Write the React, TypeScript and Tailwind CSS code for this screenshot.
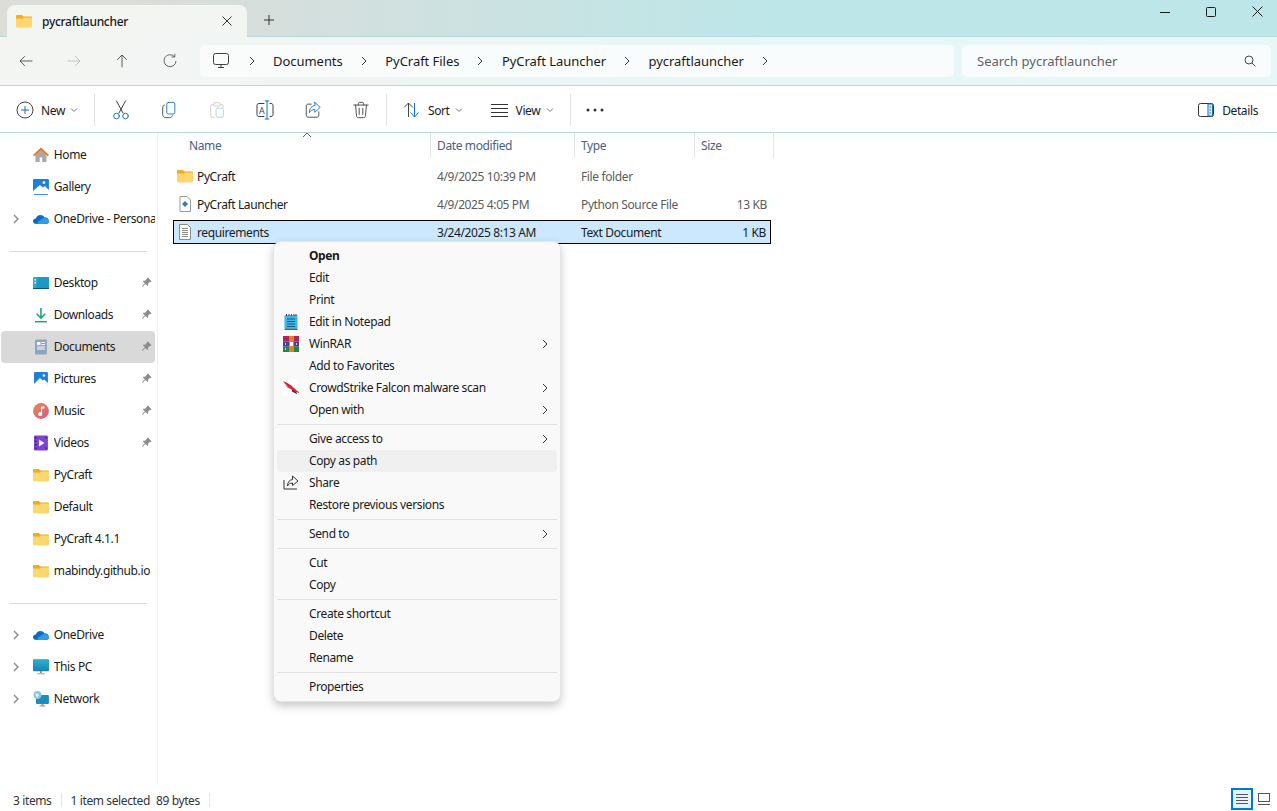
import React from "react";

const Folder = ({ s = 16 }: { s?: number }) => (
  <svg width={s} height={s} viewBox="0 0 16 16" className="shrink-0">
    <path d="M0 3.2C0 2.5.5 2 1.2 2h4.1c.4 0 .7.1 1 .4L7.6 3.6H14.8c.7 0 1.2.5 1.2 1.2V8H0Z" fill="#f0ab1e" />
    <path d="M0 5.6h7l1.2-1h6.6c.7 0 1.2.5 1.2 1.2v7.400c0 .7-.5 1.2-1.2 1.2H1.2C.5 14.400 0 13.900 0 13.200Z" fill="#fcd66f" />
  </svg>
);
const Home = () => (
  <svg width="16" height="16" viewBox="0 0 16 16">
    <path d="M2.500 8v7h4.200v-4.500h2.600V15h4.200V8L8 3Z" fill="#a9a9a9" />
    <path d="M0 8 8 .5 16 8l-1.200 1.200L8 3.200 1.200 9.200Z" fill="#e5761f" />
  </svg>
);
const Gallery = () => (
  <svg width="16" height="16" viewBox="0 0 16 16">
    <rect x="0" y="0" width="16" height="14" rx="1" fill="#1b80d8" />
    <path d="M0 12 7 6l3 2.500L12 7l4 4v3H0Z" fill="#fff" />
    <circle cx="11" cy="3.500" r="1.400" fill="#fff" />
    <path d="M1 15h14v1H1Z" fill="#3b8fd6" />
  </svg>
);
const Cloud = () => (
  <svg width="16" height="16" viewBox="0 0 16 16">
    <path d="M3.500 13C1.500 13 0 11.800 0 10.200 0 8.600 1.300 7.600 2.800 7.600 3.500 5.400 5.300 4 7.400 4c1.800 0 3.300.9 4 2.300C14 6.300 16 8 16 10.200 16 11.800 14.800 13 13 13Z" fill="#0f6cbd" />
    <path d="M5 13c-1-1.700.3-3.600 2.500-3.600 1-1.500 3.300-2.700 5-2.200 2 .6 3.500 1.200 3.500 3C16 11.800 14.800 13 13 13Z" fill="#2a9fe8" />
  </svg>
);
const Desktop = () => (
  <svg width="16" height="16" viewBox="0 0 16 16">
    <rect x="0" y="2" width="16" height="12" rx="1" fill="#2aaecb" />
    <path d="M5 2h10a1 1 0 0 1 1 1v11H3Z" fill="#1b98c7" />
    <rect x="1.500" y="4" width="1.500" height="1.500" fill="#fff" />
    <rect x="1.500" y="7" width="1.500" height="1.500" fill="#fff" />
    <rect x="0" y="13" width="16" height="1" fill="#12506e" />
  </svg>
);
const Download = () => (
  <svg width="16" height="16" viewBox="0 0 16 16">
    <path d="M7.200 1h1.600v8.200l3-3 1.100 1.100L8 12.200 3.100 7.300l1.100-1.100 3 3Z" fill="#1ca67e" />
    <rect x="2" y="14" width="12" height="1.500" fill="#1ca67e" />
  </svg>
);
const Docs = () => (
  <svg width="16" height="16" viewBox="0 0 16 16">
    <rect x="2" y="0.500" width="12" height="15" rx="1" fill="#8ea4c4" />
    <rect x="4" y="3" width="3.500" height="3" fill="#fff" />
    <path d="M8.500 3H12v1H8.500ZM8.500 5H12v1H8.500ZM4 7.500h8v1H4ZM4 9.500h8v1H4Z" fill="#fff" />
  </svg>
);
const Pictures = () => (
  <svg width="16" height="16" viewBox="0 0 16 16">
    <rect x="1" y="1" width="14" height="14" rx="1" fill="#1b80d8" />
    <path d="M1 13 7 7l3 2.500 1.500-1L15 12v3H1Z" fill="#fff" />
    <circle cx="11" cy="4.500" r="1.300" fill="#fff" />
  </svg>
);
const Music = () => (
  <svg width="16" height="16" viewBox="0 0 16 16">
    <defs>
      <linearGradient id="mg" x1="0" y1="0" x2="1" y2="1">
        <stop offset="0" stopColor="#e9894f" />
        <stop offset="1" stopColor="#cf5b8e" />
      </linearGradient>
    </defs>
    <circle cx="8" cy="8" r="8" fill="url(#mg)" />
    <path d="M8 3.500h3.500v2H9.200V11a2 2 0 1 1-1.200-1.800Z" fill="#fff" />
  </svg>
);
const Videos = () => (
  <svg width="16" height="16" viewBox="0 0 16 16">
    <rect x="1" y="0.500" width="14" height="15" rx="1" fill="#7d43d1" />
    <path d="M6 4.500v7l5.500-3.500Z" fill="#fff" />
    <path d="M2 2h1.500v1.500H2ZM2 5.500h1.500V7H2ZM2 9h1.500v1.500H2ZM2 12.500h1.500V14H2ZM12.500 2H14v1.500h-1.500ZM12.500 12.500H14V14h-1.500Z" fill="#3b1f73" />
  </svg>
);
const PC = () => (
  <svg width="16" height="16" viewBox="0 0 16 16">
    <defs>
      <linearGradient id="pcg" x1="0" y1="0" x2="0" y2="1">
        <stop offset="0" stopColor="#2bb3cc" />
        <stop offset="1" stopColor="#1483b8" />
      </linearGradient>
    </defs>
    <rect x="0" y="0.500" width="16" height="11.500" rx="1" fill="url(#pcg)" stroke="#1a6a8a" strokeWidth=".4" />
    <path d="M7 12h2v2H7ZM4.500 14.200h7v1h-7Z" fill="#8f9aa3" />
  </svg>
);
const Net = () => (
  <svg width="16" height="16" viewBox="0 0 16 16">
    <rect x="3" y="4" width="13" height="9" rx="1" fill="#1a8fbe" />
    <path d="M8.500 13h2v1.500h-2ZM6.500 14.500h6v1h-6Z" fill="#8f9aa3" />
    <circle cx="4.500" cy="4" r="4" fill="#8fc3e6" />
    <path d="M2 2.500h3l1 2-2 2.500-1-2.500Z" fill="#dff0fb" />
  </svg>
);
const Pin = () => (
  <svg width="11" height="11" viewBox="0 0 11 11">
    <path d="M6.800.4 10.600 4.200 9.700 5 9 4.800 7 6.800c.3 1 .1 1.800-.3 2.300L4.500 6.900 1.300 10.100.7 9.500 3.900 6.300 1.700 4.100c.6-.5 1.400-.6 2.300-.3l2-2-.1-.7Z" fill="#8c8c8c" />
  </svg>
);
const Chev = ({ c = "#1a1a1a", w = 10, t = 1 }: { c?: string; w?: number; t?: number }) => (
  <svg width={w} height={w} viewBox="0 0 10 10" className="shrink-0">
    <path d="M3 1l4 4-4 4" fill="none" stroke={c} strokeWidth={t} />
  </svg>
);
const Down = ({ c = "#777" }: { c?: string }) => (
  <svg width="8" height="8" viewBox="0 0 8 8" className="shrink-0">
    <path d="M1 2.500 4 5.500 7 2.500" fill="none" stroke={c} strokeWidth="1" />
  </svg>
);

const I = ({ children, s = 18 }: { children: React.ReactNode; s?: number }) => (
  <svg width={s} height={s} viewBox="0 0 20 20" fill="none" strokeLinecap="round" strokeLinejoin="round" className="shrink-0">
    {children}
  </svg>
);
const D = "#3f3f3f";
const B = "#1474c4";

const toolIcons: React.ReactNode[] = [
  <I s={20}>
    <path d="M5.500 1 12 13M14.500 1 8 13" stroke={D} />
    <circle cx="5.500" cy="16" r="2.800" stroke={B} />
    <circle cx="14.500" cy="16" r="2.800" stroke={B} />
  </I>,
  <I>
    <rect x="7.500" y="1.500" width="9" height="13" rx="2" stroke={B} />
    <path d="M5 4.500C3.500 5 3 6 3 7v8c0 2 1.500 3.500 3.500 3.500h4c1.500 0 2.500-.7 3-2" stroke={D} />
  </I>,
  <I>
    <path d="M6 4H4.500C3.500 4 3 4.700 3 5.500v11c0 1 .5 1.500 1.500 1.500H7" stroke="#c9c9c9" />
    <path d="M14 4h1.500c1 0 1.500.7 1.500 1.500V7" stroke="#c9c9c9" />
    <rect x="6.500" y="2" width="7" height="3.500" rx="1" stroke="#c9c9c9" />
    <rect x="9" y="8" width="8" height="10" rx="1.500" stroke="#a9cfee" />
  </I>,
  <I s={20}>
    <path d="M9 3.500H4C2.500 3.500 2 4.500 2 5.500v9C2 15.500 2.500 16.500 4 16.500h5M15 3.500h1c1.500 0 2 1 2 2v9c0 1-.5 2-2 2h-1" stroke={D} />
    <path d="M10.200 1h1.800 1.800M12 1v18M10.200 19H13.800" stroke={B} />
    <text x="6.700" y="13.500" fontSize="9" fontFamily="'Open Sans', sans-serif" textAnchor="middle" fill={D}>A</text>
  </I>,
  <I>
    <path d="M8 3.500H4.500C3 3.500 2.500 4.500 2.500 5.500v10c0 1.500 1 2.500 2.500 2.500h9.500c1.200 0 2-1 2-2.500V12" stroke={D} />
    <path d="M12 1.500 18 7l-6 5.500V9.500c-3 0-4.500 1-6 3.500 0-5 2.500-7.500 6-8Z" stroke={B} />
  </I>,
  <I>
    <path d="M2 4.500h16M7 4.500V3c0-1 .7-1.500 1.500-1.500h3c.8 0 1.500.5 1.500 1.500v1.500" stroke={D} />
    <path d="M4 4.500 5 16.500C5.100 17.800 6 18.500 7 18.500h6c1 0 1.900-.7 2-2l1-12M8 8v7M12 8v7" stroke={D} />
  </I>,
];

function Nav({ icon, label, chev, pin, active }: { icon: React.ReactNode; label: string; chev?: boolean; pin?: boolean; active?: boolean }) {
  return (
    <div className={`relative ml-px flex h-8 w-[154px] items-center rounded-[4px] ${active ? "bg-[#d9d9d9]" : ""}`}>
      <div className="flex w-[32px] items-center justify-end pr-[12px]">{chev && <Chev c="#8a8a8a" t={1.4} />}</div>
      {icon}
      <span className="ml-[5px] w-[102px] overflow-hidden whitespace-nowrap">{label}</span>
      {pin && <span className="absolute right-[3px] top-[10px]"><Pin /></span>}
    </div>
  );
}

const SideRule = () => (
  <div className="flex h-8 items-center pl-[9px]"><div className="h-px w-[138px] bg-[#d9d9d9]" /></div>
);

type M = { t?: string; b?: boolean; icon?: React.ReactNode; sub?: boolean; hot?: boolean; sep?: boolean };

const Notepad = () => (
  <svg width="16" height="16" viewBox="0 0 16 16">
    <rect x="1.500" y="1" width="13" height="14" rx="1" fill="#3fb6e6" />
    <path d="M3 0h1v2H3ZM5.500 0h1v2h-1ZM8 0h1v2H8ZM10.500 0h1v2h-1ZM12.500 0h1v2h-1Z" fill="#4a4a4a" />
    <path d="M4 4.500h8v1H4ZM4 7h8v1H4ZM4 9.500h8v1H4ZM4 12h8v1H4Z" fill="#0f5e87" />
    <rect x="1.500" y="14.800" width="13" height="1.200" fill="#8a4b2b" />
  </svg>
);
const Rar = () => (
  <svg width="16" height="16" viewBox="0 0 16 16">
    <rect x="0" y="0" width="16" height="5.300" fill="#b0245e" />
    <rect x="0" y="5.300" width="16" height="5.400" fill="#4e3aa8" />
    <rect x="0" y="10.700" width="16" height="5.300" fill="#1f8a3d" />
    <rect x="6" y="0" width="5" height="16" fill="#e67e22" />
    <rect x="7" y="6" width="3" height="4" fill="#fff" />
    <path d="M2 7h1v2H2ZM13 7h1v2h-1ZM2 12h1v2H2Z" fill="#f2d33c" />
  </svg>
);
const Falcon = () => (
  <svg width="16" height="16" viewBox="0 0 16 16">
    <rect width="16" height="16" fill="#fff" />
    <path d="M0 1c4 1.500 8 4 11 7 1.500 1.500 3 3 4.500 3.500L16 13c-2-.5-3.500-1-5-2C7 9 3 5.500 0 1Z" fill="#e0212d" />
    <path d="M9 9.500l4 2.500 1.500 2.500L9 11.500Z" fill="#333" />
    <path d="M2 5c2 1 4 2.500 6 4.500L4.500 7.500Z" fill="#555" />
  </svg>
);
const ShareM = () => (
  <svg width="16" height="16" viewBox="0 0 16 16" fill="none" stroke="#333" strokeWidth="1" strokeLinejoin="round">
    <path d="M1 5v9h13" />
    <path d="M9.500 1 15 6l-5.500 4.500V8C7 8 5.500 9 4.500 11c0-4 2-6 5-6.500Z" />
  </svg>
);

const menu: M[] = [
  { t: "Open", b: true },
  { t: "Edit" },
  { t: "Print" },
  { t: "Edit in Notepad", icon: <Notepad /> },
  { t: "WinRAR", icon: <Rar />, sub: true },
  { t: "Add to Favorites" },
  { t: "CrowdStrike Falcon malware scan", icon: <Falcon />, sub: true },
  { t: "Open with", sub: true },
  { sep: true },
  { t: "Give access to", sub: true },
  { t: "Copy as path", hot: true },
  { t: "Share", icon: <ShareM /> },
  { t: "Restore previous versions" },
  { sep: true },
  { t: "Send to", sub: true },
  { sep: true },
  { t: "Cut" },
  { t: "Copy" },
  { sep: true },
  { t: "Create shortcut" },
  { t: "Delete" },
  { t: "Rename" },
  { sep: true },
  { t: "Properties" },
];

const crumbs = ["Documents", "PyCraft Files", "PyCraft Launcher", "pycraftlauncher"];

export default function App() {
  return (
    <div className="relative flex h-[811px] w-[1277px] flex-col overflow-hidden bg-white text-[12px] tracking-[-0.38px] text-[#1a1a1a] font-['Open_Sans',sans-serif]">
      {/* title */}
      <div className="flex h-[37px] shrink-0 items-end border-b border-[#b5d8da] bg-gradient-to-r from-[#dcdcd8] from-10% to-[#bde6e8] to-60% pl-[7px]">
        <div className="-mb-px flex h-[32px] w-[240px] items-center rounded-t-[8px] bg-[#f3f5f3] pl-[9px] pr-[15px]">
          <Folder s={16} />
          <span className="ml-[10px] pt-[2px] font-medium tracking-[-0.3px]">pycraftlauncher</span>
          <svg width="10" height="10" viewBox="0 0 10 10" className="ml-auto" stroke="#333"><path d="M.5.500l9 9M9.500.500l-9 9" /></svg>
        </div>
        <svg width="10" height="10" viewBox="0 0 10 10" stroke="#333" className="mb-[11px] ml-[17px]"><path d="M5 0v10M0 5h10" /></svg>
        <div className="ml-auto mb-[19px] flex items-center">
          <svg width="10" height="10" viewBox="0 0 10 10" stroke="#1a1a1a" className="mr-[36px]"><path d="M0 5.500h10" /></svg>
          <svg width="10" height="10" viewBox="0 0 10 10" fill="none" stroke="#1a1a1a" className="mr-[36px]"><rect x=".5" y=".5" width="9" height="9" rx="1" /></svg>
          <svg width="11" height="11" viewBox="0 0 11 11" stroke="#1a1a1a" className="mr-[14px]"><path d="M.5.500l10 10M10.500.500l-10 10" /></svg>
        </div>
      </div>
      {/* address */}
      <div className="flex h-[49px] shrink-0 items-center border-b border-[#bfd9d9] bg-gradient-to-r from-[#f3f5f3] from-10% to-[#e7f6f6] to-60% pl-[2px] pr-[6px]">
        <div className="flex w-[198px] items-center">
          {[
            <path key="a" d="M18 10H2.500M8.500 4l-6 6 6 6" stroke="#333" />,
            <path key="b" d="M2 10h15.500M11.500 4l6 6-6 6" stroke="#b5b8b8" />,
            <path key="c" d="M10 18V2.500M4 8.500l6-6 6 6" stroke="#333" />,
            <path key="d" d="M15.500 4.500A7.500 7.500 0 1 0 17.500 10M12 5h4V1" stroke="#444" />,
          ].map((p, i) => (
            <div key={i} className="flex w-[48px] justify-center">
              <svg width="16" height="16" viewBox="0 0 20 20" fill="none">{p}</svg>
            </div>
          ))}
        </div>
        <div className="flex h-[32px] w-[754px] items-center rounded-[5px] bg-[#fbfdfd]/90 pl-[13px] text-[13px] tracking-[-0.04px]">
          <svg width="16" height="16" viewBox="0 0 16 16" fill="none" stroke="#3f3f3f" className="mr-[17.5px]">
            <rect x=".5" y=".5" width="15" height="11" rx="2" />
            <path d="M5 14.500h6M8 12v2" />
          </svg>
          <Chev c="#333" w={10} />
          {crumbs.map((c) => (
            <React.Fragment key={c}>
              <span className="ml-[16.5px] mr-[16px] whitespace-nowrap pt-[2px]">{c}</span>
              <Chev c="#333" w={10} />
            </React.Fragment>
          ))}
        </div>
        <div className="ml-[8px] flex h-[32px] flex-1 items-center justify-between rounded-[5px] bg-[#fbfdfd]/90 pl-[15px] pr-[15px] text-[13px] tracking-[0px] text-[#5f5f5f]">
          <span className="pt-[2px]">Search pycraftlauncher</span>
          <svg width="12" height="12" viewBox="0 0 12 12" fill="none" stroke="#4a4a4a"><circle cx="5" cy="5" r="4" /><path d="M8 8l3.500 3.500" /></svg>
        </div>
      </div>
      {/* toolbar */}
      <div className="flex h-[47px] shrink-0 items-center border-b border-[#b5d8da] pl-[16px] pr-[19px] pt-[2px]">
        <svg width="18" height="18" viewBox="0 0 18 18" fill="none">
          <circle cx="9" cy="9" r="8" stroke="#444" />
          <path d="M9 5v8M5 9h8" stroke={B} />
        </svg>
        <span className="ml-[7px] pt-px">New</span>
        <span className="ml-[5px]"><Down /></span>
        <div className="ml-[16px] h-[32px] w-px bg-[#e2e2e2]" />
        {toolIcons.map((ic, i) => (
          <div key={i} className={`flex w-[48px] justify-center ${i === 0 ? "ml-[2px]" : ""}`}>{ic}</div>
        ))}
        <div className="ml-[1px] h-[32px] w-px bg-[#e2e2e2]" />
        <svg width="18" height="18" viewBox="0 0 18 18" fill="none" className="ml-[16px]">
          <path d="M5.500 16V2M1 6.500l4.500-4.500L10 6.500" stroke="#444" />
          <path d="M11.500 2v14M7.500 11.500l4 4.500 4-4.500" stroke={B} />
        </svg>
        <span className="ml-[7px] pt-px">Sort</span>
        <span className="ml-[5px]"><Down /></span>
        <svg width="17" height="14" viewBox="0 0 17 14" fill="none" stroke="#333" className="ml-[28px]">
          <path d="M0 1.500h17M0 5.500h17M0 9.500h17M0 13.500h17" />
        </svg>
        <span className="ml-[8px] pt-px">View</span>
        <span className="ml-[6px]"><Down /></span>
        <div className="ml-[16px] h-[32px] w-px bg-[#e2e2e2]" />
        <svg width="18" height="4" viewBox="0 0 18 4" fill="#333" className="ml-[15px]">
          <circle cx="2" cy="2" r="1.500" /><circle cx="9" cy="2" r="1.500" /><circle cx="16" cy="2" r="1.500" />
        </svg>
        <svg width="16" height="14" viewBox="0 0 16 14" fill="none" className="ml-auto">
          <rect x=".5" y=".5" width="15" height="13" rx="2" stroke="#333" />
          <path d="M10 1h4.500v12H10Z" fill="#d6e9f8" stroke={B} />
          <path d="M11.500 4h1.500M11.500 7h1.500M11.500 10h1.500" stroke={B} />
        </svg>
        <span className="ml-[8px] pt-px">Details</span>
      </div>
      {/* body */}
      <div className="flex min-h-0 flex-1">
        <div className="w-[158px] shrink-0 border-r border-[#f1f1f1] pt-[6px]">
          <Nav icon={<Home />} label="Home" />
          <Nav icon={<Gallery />} label="Gallery" />
          <Nav icon={<Cloud />} label="OneDrive - Personal" chev />
          <SideRule />
          <Nav icon={<Desktop />} label="Desktop" pin />
          <Nav icon={<Download />} label="Downloads" pin />
          <Nav icon={<Docs />} label="Documents" pin active />
          <Nav icon={<Pictures />} label="Pictures" pin />
          <Nav icon={<Music />} label="Music" pin />
          <Nav icon={<Videos />} label="Videos" pin />
          <Nav icon={<Folder />} label="PyCraft" />
          <Nav icon={<Folder />} label="Default" />
          <Nav icon={<Folder />} label="PyCraft 4.1.1" />
          <Nav icon={<Folder />} label="mabindy.github.io" />
          <SideRule />
          <Nav icon={<Cloud />} label="OneDrive" chev />
          <Nav icon={<PC />} label="This PC" chev />
          <Nav icon={<Net />} label="Network" chev />
        </div>
        <div className="relative flex-1 pl-[15px]">
          <svg width="10" height="6" viewBox="0 0 10 6" fill="none" stroke="#666" className="absolute left-[144px] top-[-1px]"><path d="M1 5l4-4 4 4" /></svg>
          <div className="grid h-[25px] w-[601px] grid-cols-[258px_144px_120px_79px] items-center text-[#4c607a]">
            <div className="flex h-full items-center border-r border-[#e5e5e5] pl-[16px]">Name</div>
            <div className="flex h-full items-center border-r border-[#e5e5e5] pl-[6px]">Date modified</div>
            <div className="flex h-full items-center border-r border-[#e5e5e5] pl-[6px]">Type</div>
            <div className="flex h-full items-center border-r border-[#e5e5e5] pl-[6px]">Size</div>
          </div>
          <div className="mt-[6px] flex w-[598px] flex-col gap-[4px] text-[#5c5c5c]">
            <div className="grid h-[24px] grid-cols-[258px_144px_120px_76px] items-center pt-[2px]">
              <div className="flex items-center pl-[4px] text-[#1a1a1a]"><span className="-mt-[2px]"><Folder /></span><span className="ml-[4px]">PyCraft</span></div>
              <div className="pl-[6px]">4/9/2025 10:39 PM</div>
              <div className="pl-[6px]">File folder</div>
              <div />
            </div>
            <div className="grid h-[24px] grid-cols-[258px_144px_120px_76px] items-center pt-[2px]">
              <div className="flex items-center pl-[4px] text-[#1a1a1a]">
                <svg width="16" height="16" viewBox="0 0 16 16" className="-mt-[2px] shrink-0">
                  <path d="M3 .5h7L13.500 4v11.500H3Z" fill="#fff" stroke="#9a9a9a" />
                  <path d="M8 5 11 8 8 11 5 8Z" fill="#2f7fb5" />
                </svg>
                <span className="ml-[4px]">PyCraft Launcher</span>
              </div>
              <div className="pl-[6px]">4/9/2025 4:05 PM</div>
              <div className="pl-[6px]">Python Source File</div>
              <div className="pr-[4px] text-right">13 KB</div>
            </div>
            <div className="grid h-[24px] grid-cols-[258px_144px_120px_74px] items-center border border-black bg-[#cce8ff] pt-[2px] text-[#1a1a1a]">
              <div className="flex items-center pl-[3px]">
                <svg width="16" height="16" viewBox="0 0 16 16" className="-mt-[2px] shrink-0">
                  <path d="M2.500.5h8L13.500 3.500v12h-11Z" fill="#fff" stroke="#8a8a8a" />
                  <path d="M5 4.500h6M5 6.500h6M5 8.500h6M5 10.500h6M5 12.500h6" stroke="#8a8a8a" />
                </svg>
                <span className="ml-[4px]">requirements</span>
              </div>
              <div className="pl-[5px]">3/24/2025 8:13 AM</div>
              <div className="pl-[5px]">Text Document</div>
              <div className="pr-[4px] text-right">1 KB</div>
            </div>
          </div>
        </div>
      </div>
      {/* status */}
      <div className="flex h-[26px] shrink-0 items-center pl-[13px] pt-[2px] text-[#333]">
        <span className="pt-[4px]">3 items</span>
        <div className="ml-[9px] mt-[2px] h-[14px] w-px bg-[#e5e5e5]" />
        <span className="ml-[9px] pt-[4px]">1 item selected</span>
        <span className="ml-[6px] pt-[4px]">89 bytes</span>
        <div className="ml-[9px] mt-[2px] h-[14px] w-px bg-[#e5e5e5]" />
        <div className="ml-auto mr-[2px] flex items-center">
          <div className="flex h-[22px] w-[22px] items-center justify-center border-2 border-[#0078d4] bg-[#e5f3fb]">
            <svg width="12" height="11" viewBox="0 0 12 11" stroke="#555"><path d="M0 .5h12M0 3.500h12M0 6.500h12M0 9.500h12" /></svg>
          </div>
          <div className="flex h-[22px] w-[22px] items-center justify-center">
            <svg width="12" height="12" viewBox="0 0 12 12" fill="none" stroke="#555"><rect x=".5" y=".5" width="11" height="8" /><path d="M0 11.500h12" /></svg>
          </div>
        </div>
      </div>
      {/* context menu */}
      <div className="absolute left-[273px] top-[241px] w-[288px] rounded-[8px] border border-[#e5e5e5] bg-[#f9f9f9] p-[3px] shadow-[0_4px_10px_rgba(0,0,0,0.22)]">
        {menu.map((m, i) =>
          m.sep ? (
            <div key={i} className="flex h-[7px] items-center"><div className="h-px w-full bg-[#e0e0e0]" /></div>
          ) : (
            <div key={i} className={`flex h-[22px] items-center rounded-[4px] ${m.hot ? "bg-[#f0f0f0]" : ""}`}>
              <span className="mr-[4px] flex w-[28px] justify-center">{m.icon}</span>
              <span className={m.b ? "font-bold" : ""}>{m.t}</span>
              {m.sub && <span className="ml-auto mr-[7px]"><Chev c="#333" w={10} /></span>}
            </div>
          )
        )}
      </div>
    </div>
  );
}
